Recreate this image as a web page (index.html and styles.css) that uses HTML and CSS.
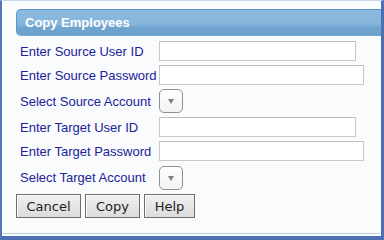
FILE: index.html
```html
<!DOCTYPE html>
<html>
<head>
<meta charset="utf-8">
<link rel="stylesheet" href="styles.css">
</head>
<body>
<div class="frame">
  <div class="header">Copy Employees</div>
  <div class="form">
    <label class="lbl">Enter Source User ID</label>
    <div class="field"><input class="txt short" type="text"></div>
    <label class="lbl">Enter Source Password</label>
    <div class="field"><input class="txt long" type="password"></div>
    <label class="lbl">Select Source Account</label>
    <div class="field"><div class="sel"><span class="arrow"></span></div></div>
    <label class="lbl">Enter Target User ID</label>
    <div class="field"><input class="txt short" type="text"></div>
    <label class="lbl">Enter Target Password</label>
    <div class="field"><input class="txt long" type="password"></div>
    <label class="lbl">Select Target Account</label>
    <div class="field"><div class="sel"><span class="arrow"></span></div></div>
  </div>
  <div class="buttons">
    <button class="btn w-cancel">Cancel</button>
    <button class="btn w-copy">Copy</button>
    <button class="btn w-help">Help</button>
  </div>
  <div class="spacer"></div>
  <div class="bottomline"></div>
</div>
</body>
</html>
```
FILE: styles.css
```css
html, body {
  margin: 0;
  padding: 0;
  background: #ffffff;
}
.frame {
  box-sizing: border-box;
  width: 384px;
  height: 240px;
  background: #f9fbfc;
  border-top: 1px solid #c3d6ea;
  border-left: 2px solid #5376b8;
  border-right: 3px solid #4d6fb3;
  border-bottom: 4px solid #4d6fb3;
  display: flex;
  flex-direction: column;
  font-family: "Liberation Sans", Arial, sans-serif;
}
.header {
  box-sizing: border-box;
  margin: 8px 0 0 14px;
  height: 27px;
  background: linear-gradient(#8dbbe0 0%, #86b5dc 55%, #6fa4cf 70%, #6aa0cc 100%);
  border-top: 1px solid #5b94c6;
  border-left: 1px solid #5b94c6;
  border-bottom: 1px solid #7aa9d2;
  border-radius: 5px 0 0 5px;
  color: #ffffff;
  font-weight: bold;
  font-size: 13px;
  line-height: 25px;
  padding-left: 8px;
}
.form {
  display: grid;
  grid-template-columns: 139px auto;
  grid-template-rows: 20px 20px 24px 20px 20px 25px;
  row-gap: 4px;
  margin: 5px 0 0 18px;
}
.lbl {
  color: #22229a;
  font-size: 13px;
  display: flex;
  align-items: center;
  white-space: nowrap;
}
.field {
  display: flex;
  align-items: center;
}
.txt {
  box-sizing: border-box;
  height: 20px;
  margin: 0;
  padding: 0 2px;
  border: 1px solid #c8c8c8;
  border-top-color: #bdbdbd;
  background: #ffffff;
  outline: none;
}
.short { width: 197px; }
.long { width: 205px; }
.sel {
  box-sizing: border-box;
  width: 24px;
  height: 24px;
  border: 1px solid #8f8f8f;
  border-radius: 5px;
  background: linear-gradient(#ffffff, #f2f2f2);
  display: flex;
  align-items: center;
  justify-content: center;
}
.arrow {
  width: 0;
  height: 0;
  border-left: 3px solid transparent;
  border-right: 3px solid transparent;
  border-top: 5px solid #808080;
  margin-top: 1px;
}
.buttons {
  display: flex;
  gap: 4px;
  margin: 4px 0 0 14px;
}
.btn {
  box-sizing: border-box;
  height: 24px;
  margin: 0;
  padding: 0;
  border: 1px solid #6e6e6e;
  border-radius: 0;
  background: linear-gradient(#f0f0f0, #dcdcdc);
  color: #1e1e1e;
  font-family: "DejaVu Sans", Verdana, sans-serif;
  font-size: 13px;
  box-shadow: inset 1px 1px 0 #fafafa;
}
.w-cancel { width: 65px; }
.w-copy { width: 55px; }
.w-help { width: 51px; }
.spacer { flex: 1; }
.bottomline {
  height: 1px;
  background: #b8cfe6;
  margin: 0 1px 2px 1px;
}
```
